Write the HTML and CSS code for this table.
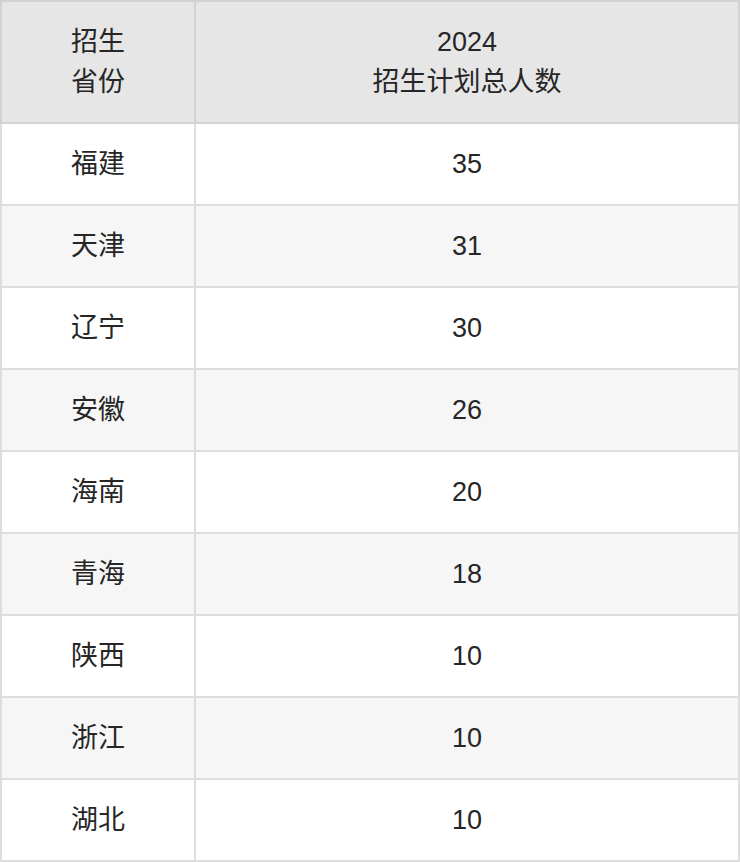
FILE: index.html
```html
<!DOCTYPE html>
<html lang="zh-CN">
<head>
<meta charset="utf-8">
<title>招生计划</title>
<link rel="stylesheet" href="styles.css">
</head>
<body>
<table class="plan">
  <colgroup>
    <col class="col-prov">
    <col class="col-num">
  </colgroup>
  <thead>
    <tr>
      <th>招生<br>省份</th>
      <th>2024<br>招生计划总人数</th>
    </tr>
  </thead>
  <tbody>
    <tr><td>福建</td><td>35</td></tr>
    <tr><td>天津</td><td>31</td></tr>
    <tr><td>辽宁</td><td>30</td></tr>
    <tr><td>安徽</td><td>26</td></tr>
    <tr><td>海南</td><td>20</td></tr>
    <tr><td>青海</td><td>18</td></tr>
    <tr><td>陕西</td><td>10</td></tr>
    <tr><td>浙江</td><td>10</td></tr>
    <tr><td>湖北</td><td>10</td></tr>
  </tbody>
</table>
</body>
</html>
```

FILE: styles.css
```css
html, body {
  margin: 0;
  padding: 0;
  background: #ffffff;
}

.plan {
  width: 740px;
  table-layout: fixed;
  border-collapse: collapse;
  font-family: "Liberation Sans", "Noto Sans CJK SC", sans-serif;
  font-size: 27px;
  color: #262626;
}

.col-prov {
  width: 194px;
}

.plan th,
.plan td {
  border: 2px solid #dddddd;
  padding: 20px 0;
  line-height: 40px;
  text-align: center;
  font-weight: normal;
}

.plan th {
  background: #e6e6e6;
  border-color: #d2d2d2;
}

.plan tbody tr:nth-child(even) td {
  background: #f6f6f6;
}
```
